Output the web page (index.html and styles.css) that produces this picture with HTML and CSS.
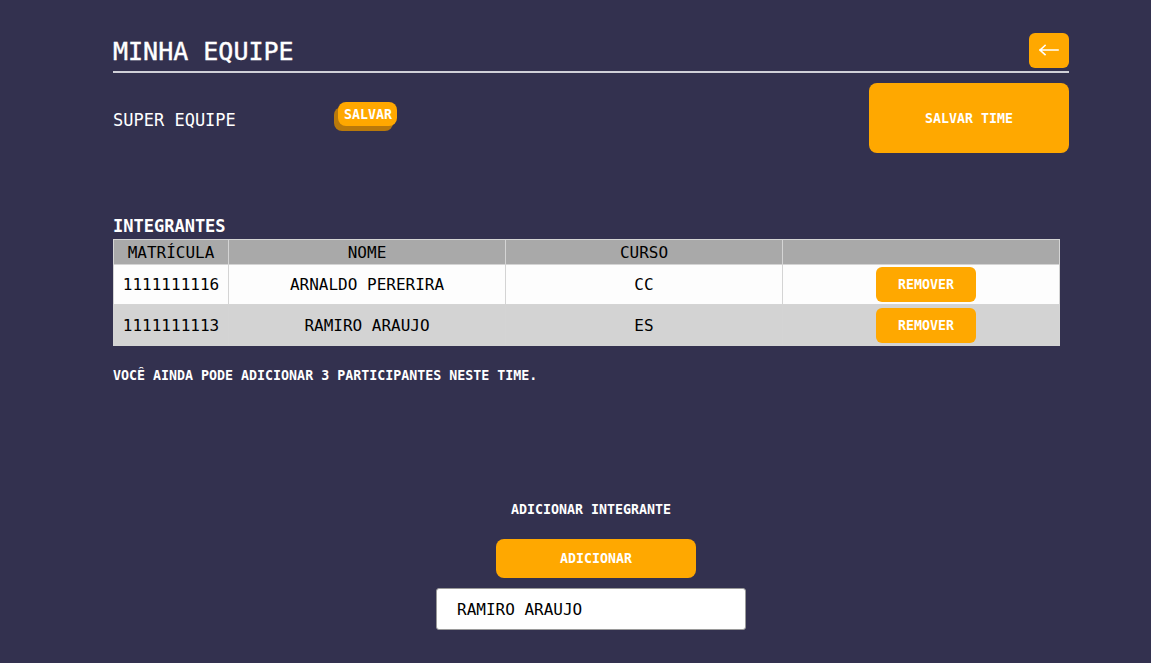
FILE: index.html
```html
<!DOCTYPE html>
<html lang="pt-BR">
<head>
<meta charset="utf-8">
<title>Minha Equipe</title>
<link rel="stylesheet" href="styles.css">
</head>
<body>
<main class="page">
  <header class="page-header">
    <h1 class="page-title">MINHA EQUIPE</h1>
    <button class="back-btn" aria-label="Voltar">
      <svg width="20" height="12" viewBox="0 0 20 12" aria-hidden="true">
        <path d="M1 6 H19 M1 6 L6 1.5 M1 6 L6 10.5" fill="none" stroke="#ffffff" stroke-width="1.6" stroke-linecap="square"/>
      </svg>
    </button>
  </header>

  <section class="team-row">
    <div class="team-name">
      <span class="team-label">SUPER EQUIPE</span>
      <button class="mini-btn">SALVAR</button>
    </div>
    <button class="big-btn">SALVAR TIME</button>
  </section>

  <section class="members">
    <h2 class="section-title">INTEGRANTES</h2>
    <table class="members-table">
      <thead>
        <tr>
          <th class="col-mat">MATRÍCULA</th>
          <th class="col-name">NOME</th>
          <th class="col-course">CURSO</th>
          <th class="col-action"></th>
        </tr>
      </thead>
      <tbody>
        <tr class="row-light">
          <td>1111111116</td>
          <td>ARNALDO PERERIRA</td>
          <td>CC</td>
          <td><button class="remove-btn">REMOVER</button></td>
        </tr>
        <tr class="row-gray">
          <td>1111111113</td>
          <td>RAMIRO ARAUJO</td>
          <td>ES</td>
          <td><button class="remove-btn">REMOVER</button></td>
        </tr>
      </tbody>
    </table>
    <p class="notice">VOCÊ AINDA PODE ADICIONAR 3 PARTICIPANTES NESTE TIME.</p>
  </section>

  <section class="add-member">
    <h3 class="add-title">ADICIONAR INTEGRANTE</h3>
    <button class="add-btn">ADICIONAR</button>
    <input class="add-input" type="text" value="RAMIRO ARAUJO">
  </section>
</main>
</body>
</html>
```

FILE: styles.css
```css
* { box-sizing: border-box; }

html, body {
  margin: 0;
  padding: 0;
  background: #33314f;
  height: 100%;
}

body {
  font-family: "DejaVu Sans Mono", "Liberation Mono", monospace;
  color: #ffffff;
}

.page {
  padding: 33px 82px 0 113px;
}

.page-header {
  display: flex;
  align-items: center;
  justify-content: space-between;
  height: 40px;
  border-bottom: 2px solid #d0d0d8;
}

.page-title {
  margin: 0;
  font-size: 25px;
  font-weight: normal;
  letter-spacing: 0;
  line-height: 37px;
  align-self: flex-start;
  -webkit-text-stroke: 0.4px #ffffff;
}

.back-btn {
  width: 40px;
  height: 35px;
  border: none;
  border-radius: 6px;
  background: #ffa800;
  display: flex;
  align-items: center;
  justify-content: center;
  padding: 0 0 2px;
  align-self: flex-start;
}

.back-btn svg { display: block; }

.team-row {
  display: flex;
  align-items: center;
  justify-content: space-between;
  margin-top: 10px;
}

.team-name {
  display: flex;
  align-items: center;
}

.team-label {
  font-size: 17px;
  width: 225px;
  padding-top: 3px;
}

.mini-btn {
  height: 24px;
  padding: 0 5px 0 6px;
  border: none;
  border-radius: 8px;
  background: #ffa800;
  color: #ffffff;
  font-family: inherit;
  font-weight: bold;
  font-size: 13.3px;
  box-shadow: -4px 5px 0 #b9790b;
  margin-bottom: 8px;
}

.big-btn {
  width: 200px;
  height: 70px;
  border: none;
  border-radius: 8px;
  background: #ffa800;
  color: #ffffff;
  font-family: inherit;
  font-weight: bold;
  font-size: 13.3px;
}

.members {
  margin-top: 60px;
}

.section-title {
  margin: 0;
  font-size: 17px;
  font-weight: bold;
  line-height: 26px;
}

.members-table {
  width: 947px;
  border-collapse: collapse;
  color: #000000;
  font-size: 16px;
}

.members-table th,
.members-table td {
  border: 1px solid #d4d4d4;
  text-align: center;
  padding: 0;
}

.members-table th {
  background: #a9a9a9;
  font-weight: normal;
  height: 25px;
}

.col-mat { width: 115px; }
.col-name { width: 277px; }
.col-course { width: 277px; }

.row-light td {
  background: #fdfdfd;
  height: 40px;
}

.row-gray td {
  background: #d3d3d3;
  height: 41px;
}

.remove-btn {
  width: 100px;
  height: 35px;
  border: none;
  border-radius: 6px;
  background: #ffa800;
  color: #ffffff;
  font-family: inherit;
  font-weight: bold;
  font-size: 13.3px;
  margin-left: 10px;
  vertical-align: middle;
}

.notice {
  margin: 22px 0 0;
  font-size: 13.3px;
  font-weight: bold;
}

.add-member {
  display: flex;
  flex-direction: column;
  align-items: center;
  margin-top: 119px;
}

.add-title {
  margin: 0;
  font-size: 13.3px;
  font-weight: bold;
}

.add-btn {
  width: 200px;
  height: 39px;
  margin-top: 22px;
  margin-left: 10px;
  border: none;
  border-radius: 8px;
  background: #ffa800;
  color: #ffffff;
  font-family: inherit;
  font-weight: bold;
  font-size: 13.3px;
}

.add-input {
  width: 310px;
  height: 42px;
  margin-top: 10px;
  padding: 0 20px;
  border: 1px solid #9a9a9a;
  border-radius: 3px;
  background: #ffffff;
  color: #000000;
  font-family: inherit;
  font-size: 16px;
}
```
